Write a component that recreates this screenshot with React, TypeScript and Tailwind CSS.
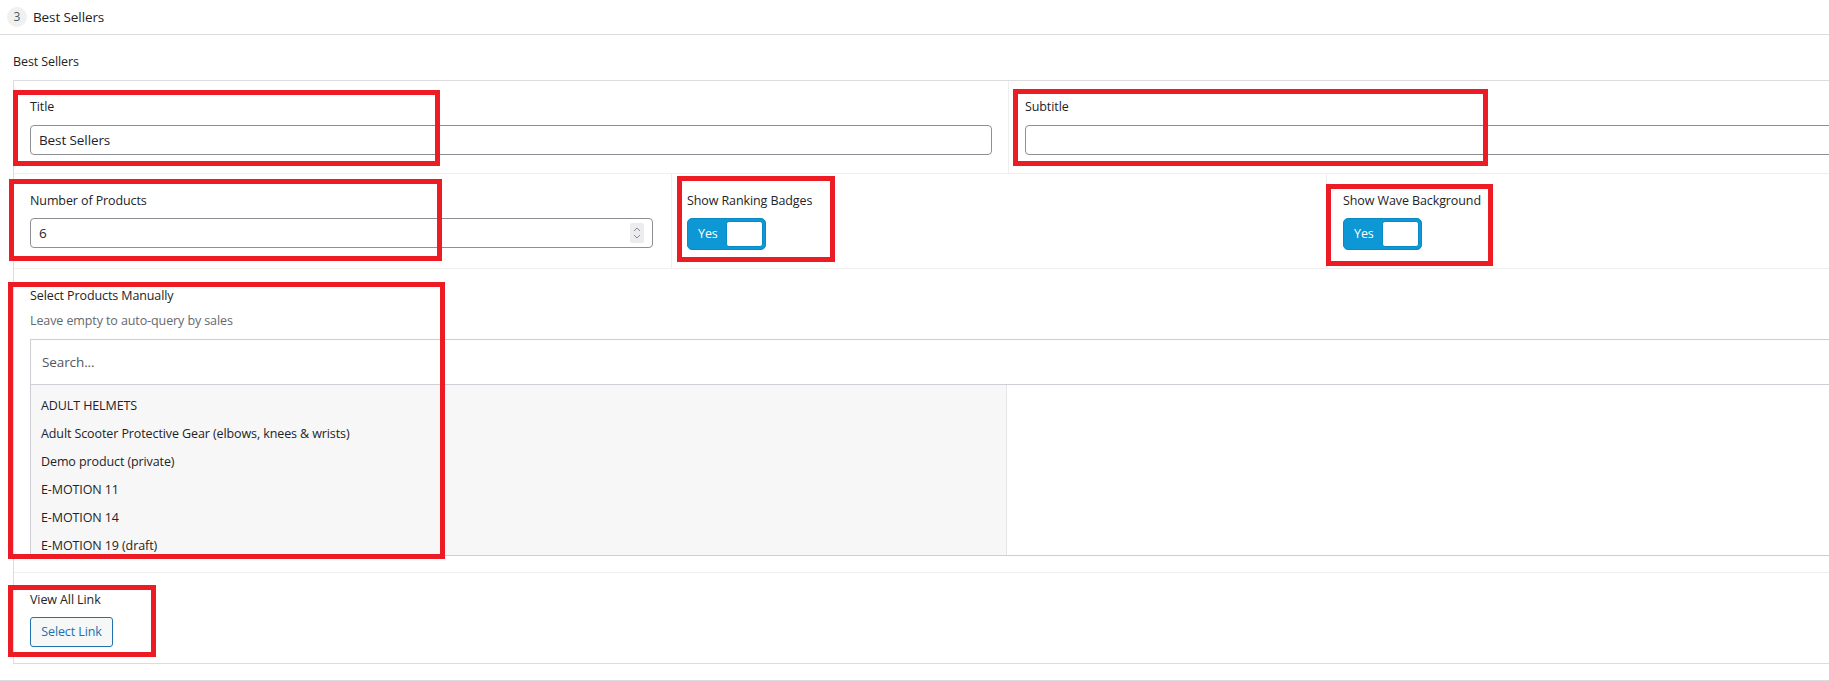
import React from "react";

const products = [
  "ADULT HELMETS",
  "Adult Scooter Protective Gear (elbows, knees & wrists)",
  "Demo product (private)",
  "E-MOTION 11",
  "E-MOTION 14",
  "E-MOTION 19 (draft)",
];

const Label: React.FC<{ children: React.ReactNode }> = ({ children }) => (
  <div className="leading-[18px] text-[#1d2327]">{children}</div>
);

const Toggle: React.FC = () => (
  <div className="mt-2 flex h-[32px] w-[79px] items-center justify-between rounded-[5px] border border-[#0a8ac4] bg-[#0d97d4] pl-[10px] pr-[2px]">
    <span className="text-white">Yes</span>
    <span className="h-[26px] w-[37px] rounded-[3px] border border-[#0a8ac4] bg-white" />
  </div>
);

const App: React.FC = () => {
  return (
    <div className="relative h-[681px] w-[1829px] overflow-hidden bg-white font-['Open_Sans',sans-serif] text-[12.5px] tracking-[-0.1px] text-[#1d2327]">
      {/* postbox header */}
      <div className="flex h-[35px] items-center gap-[6px] border-b border-[#dcdcde] pl-[7px]">
        <span className="flex h-5 w-5 items-center justify-center rounded-full bg-[#f0f0f1] text-[12px] text-[#50575e]">
          3
        </span>
        <span className="text-[13.5px]">Best Sellers</span>
      </div>

      <div className="px-[13px] pt-[18px] leading-[18px]">Best Sellers</div>

      <div className="ml-[13px] mt-[9px] w-[1990px] border border-[#dcdcde]">
        {/* title / subtitle */}
        <div className="flex">
          <div className="w-[994px] px-4 pb-[18px] pt-[17px]">
            <Label>Title</Label>
            <div className="mt-[9px] flex h-[30px] items-center rounded-[4px] border border-[#8c8f94] px-2 text-[13.5px]">
              Best Sellers
            </div>
          </div>
          <div className="flex-1 border-l border-[#eeeeee] px-4 pb-[18px] pt-[17px]">
            <Label>Subtitle</Label>
            <div className="mt-[9px] h-[30px] rounded-[4px] border border-[#8c8f94]" />
          </div>
        </div>

        {/* count + switches */}
        <div className="flex border-t border-[#eeeeee]">
          <div className="w-[657px] pb-[18px] pl-4 pr-[18px] pt-[18px]">
            <Label>Number of Products</Label>
            <div className="mt-2 flex h-[30px] items-center justify-between rounded-[4px] border border-[#8c8f94] pl-2 pr-[8px] text-[13.5px]">
              <span>6</span>
              <svg width="14" height="20" viewBox="0 0 14 20" className="rounded-[2px] bg-[#ececef]">
                <path d="M4 8 L7 5 L10 8" fill="none" stroke="#8a8a93" strokeWidth="1" />
                <path d="M4 12 L7 15 L10 12" fill="none" stroke="#8a8a93" strokeWidth="1" />
              </svg>
            </div>
          </div>
          <div className="w-[655px] border-l border-[#eeeeee] pb-[18px] pl-[15px] pt-[18px]">
            <Label>Show Ranking Badges</Label>
            <Toggle />
          </div>
          <div className="flex-1 border-l border-[#eeeeee] pb-[18px] pl-4 pt-[18px]">
            <Label>Show Wave Background</Label>
            <Toggle />
          </div>
        </div>

        {/* relationship picker */}
        <div className="border-t border-[#eeeeee] px-4 pb-4 pt-[18px]">
          <Label>Select Products Manually</Label>
          <div className="mt-[7px] leading-[18px] text-[#646970]">Leave empty to auto-query by sales</div>
          <div className="mt-[9px] border border-[#ccd0d4]">
            <div className="flex h-[45px] items-center border-b border-[#ccd0d4] pl-[11px] text-[13.5px] text-[#50575e]">
              Search...
            </div>
            <div className="flex h-[170px]">
              <ul className="w-[976px] overflow-hidden border-r border-[#e5e5e5] bg-[#f7f7f7] pt-[7px]">
                {products.map((p) => (
                  <li key={p} className="h-[28px] pl-[10px] leading-[28px]">
                    {p}
                  </li>
                ))}
              </ul>
              <div className="flex-1 bg-white" />
            </div>
          </div>
        </div>

        {/* link */}
        <div className="border-t border-[#eeeeee] px-4 pb-4 pt-[18px]">
          <Label>View All Link</Label>
          <button className="mt-2 h-[30px] w-[83px] rounded-[3px] border border-[#2271b1] bg-[#f6f7f7] text-[#2271b1]">
            Select Link
          </button>
        </div>
      </div>

      <div className="mt-[16px] h-px w-full bg-[#dcdcde]" />

      {/* highlight frames */}
      <div className="pointer-events-none absolute left-[13px] top-[90px] h-[76px] w-[427px] border-[5px] border-[#ed1c24]" />
      <div className="pointer-events-none absolute left-[1013px] top-[89px] h-[77px] w-[475px] border-[5px] border-[#ed1c24]" />
      <div className="pointer-events-none absolute left-[9px] top-[179px] h-[82px] w-[433px] border-[5px] border-[#ed1c24]" />
      <div className="pointer-events-none absolute left-[677px] top-[176px] h-[86px] w-[158px] border-[5px] border-[#ed1c24]" />
      <div className="pointer-events-none absolute left-[1326px] top-[184px] h-[82px] w-[167px] border-[5px] border-[#ed1c24]" />
      <div className="pointer-events-none absolute left-[8px] top-[282px] h-[277px] w-[437px] border-[5px] border-[#ed1c24]" />
      <div className="pointer-events-none absolute left-[8px] top-[585px] h-[72px] w-[148px] border-[5px] border-[#ed1c24]" />
    </div>
  );
};

export default App;
